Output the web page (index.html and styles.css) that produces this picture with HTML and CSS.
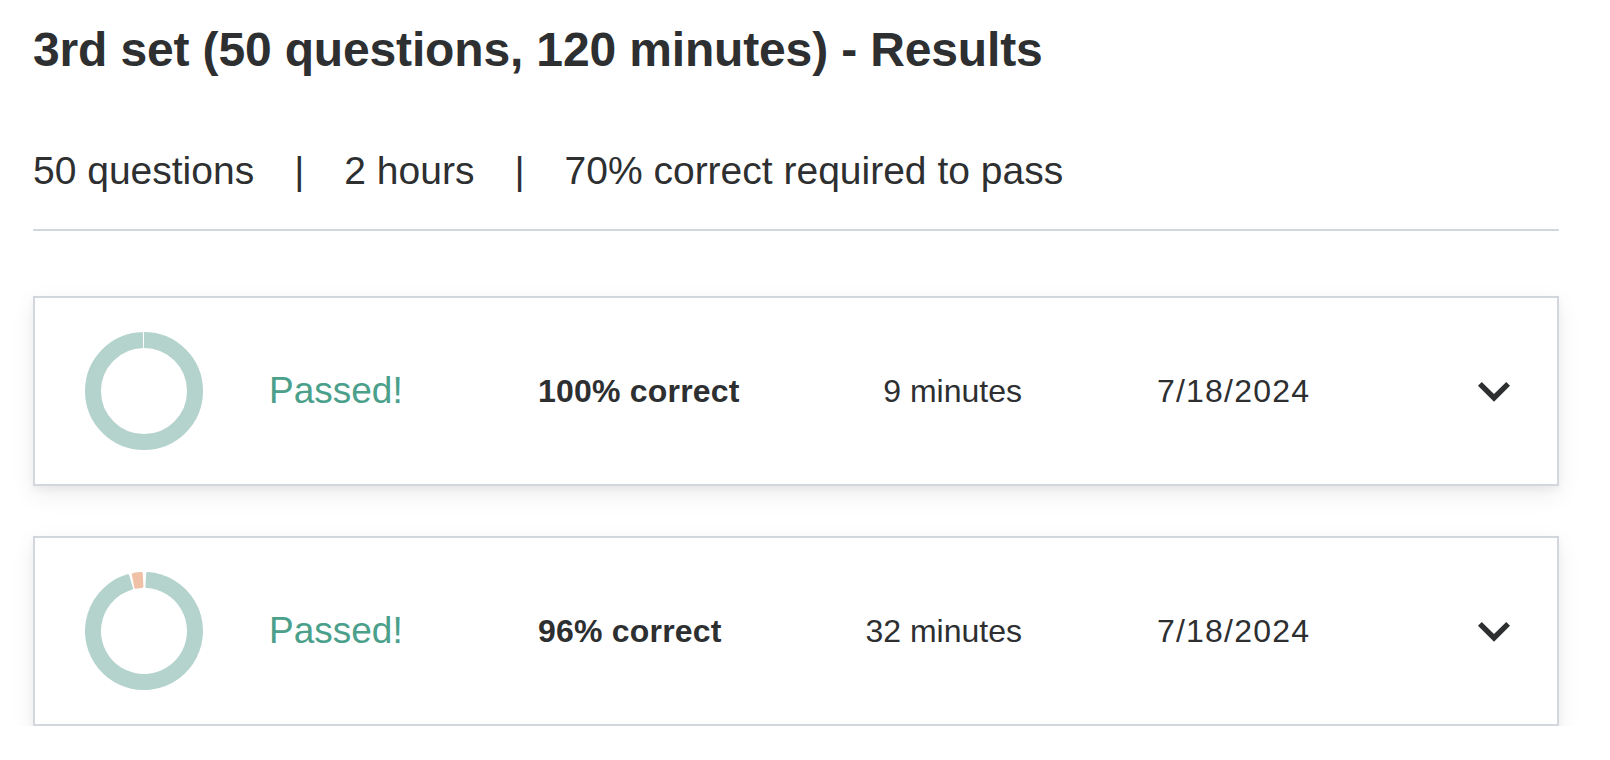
FILE: index.html
```html
<!DOCTYPE html>
<html lang="en">
<head>
<meta charset="utf-8">
<title>3rd set - Results</title>
<link rel="stylesheet" href="styles.css">
</head>
<body>
<main class="page">
  <h1 class="title">3rd set (50 questions, 120 minutes) - Results</h1>
  <p class="meta">
    <span>50 questions</span><span class="sep">|</span><span>2 hours</span><span class="sep">|</span><span>70% correct required to pass</span>
  </p>

  <ul class="results">
    <li class="result">
      <div class="chart">
        <svg class="donut" width="118" height="118" viewBox="0 0 118 118" aria-hidden="true">
          <circle cx="59" cy="59" r="51" fill="none" stroke="#b5d3cd" stroke-width="16" stroke-dasharray="318.9 1.54" transform="rotate(-90 59 59)"/>
        </svg>
      </div>
      <div class="status">Passed!</div>
      <div class="score">100% correct</div>
      <div class="time">9 minutes</div>
      <div class="date">7/18/2024</div>
      <button class="toggle" type="button" aria-label="Expand">
        <svg width="64" height="64" viewBox="0 0 24 24" aria-hidden="true"><path d="M16.59 8.59L12 13.17 7.41 8.59 6 10l6 6 6-6z" fill="#2d2f31"/></svg>
      </button>
    </li>
    <li class="result">
      <div class="chart">
        <svg class="donut" width="118" height="118" viewBox="0 0 118 118" aria-hidden="true">
          <path d="M62.711 1.62 A57.5 57.5 0 1 1 42.861 3.811 L46.51 16.288 A44.5 44.5 0 1 0 61.872 14.593 Z" fill="#b5d3cd" stroke="#b5d3cd" stroke-width="3" stroke-linejoin="round"/>
          <path d="M48.324 2.5 A57.5 57.5 0 0 1 56.291 1.564 L56.904 14.549 A44.5 44.5 0 0 0 50.738 15.274 Z" fill="#f1c1a7" stroke="#f1c1a7" stroke-width="3" stroke-linejoin="round"/>
        </svg>
      </div>
      <div class="status">Passed!</div>
      <div class="score">96% correct</div>
      <div class="time">32 minutes</div>
      <div class="date">7/18/2024</div>
      <button class="toggle" type="button" aria-label="Expand">
        <svg width="64" height="64" viewBox="0 0 24 24" aria-hidden="true"><path d="M16.59 8.59L12 13.17 7.41 8.59 6 10l6 6 6-6z" fill="#2d2f31"/></svg>
      </button>
    </li>
  </ul>
</main>
</body>
</html>
```

FILE: styles.css
```css
* {
  box-sizing: border-box;
}

html, body {
  margin: 0;
  padding: 0;
  background: #ffffff;
}

body {
  font-family: "Liberation Sans", Arial, Helvetica, sans-serif;
  color: #2d2f31;
}

.page {
  padding: 21px 51px 0 33px;
}

.title {
  margin: 0;
  font-size: 48px;
  line-height: 58px;
  font-weight: 700;
  letter-spacing: -0.15px;
}

.meta {
  margin: 65px 0 0;
  padding-bottom: 31px;
  border-bottom: 2px solid #d1d7dc;
  font-size: 39px;
  line-height: 54px;
  display: flex;
}

.sep {
  margin: 0 40px;
}

.results {
  list-style: none;
  margin: 65px 0 0;
  padding: 0;
  display: flex;
  flex-direction: column;
  gap: 50px;
}

.result {
  display: grid;
  grid-template-columns: 184px 269px 220px 264px 440px 64px;
  align-items: center;
  padding: 34px 31px 34px 50px;
  border: 2px solid #d1d7dc;
  background: #fff;
  box-shadow: 0 4px 8px rgba(0, 0, 0, 0.05), 0 8px 24px rgba(0, 0, 0, 0.07);
}

.chart {
  height: 118px;
}

.donut {
  display: block;
}

.status {
  font-size: 37px;
  line-height: 44px;
  color: #4aa08a;
}

.score {
  font-size: 32px;
  line-height: 40px;
  font-weight: 700;
  letter-spacing: 0.2px;
}

.time {
  font-size: 32px;
  line-height: 40px;
  text-align: right;
}

.date {
  font-size: 32px;
  line-height: 40px;
  padding-left: 135px;
  letter-spacing: 1.2px;
}

.toggle {
  width: 64px;
  height: 64px;
  padding: 0;
  border: 0;
  background: none;
  cursor: pointer;
}

.toggle svg {
  display: block;
}
```
